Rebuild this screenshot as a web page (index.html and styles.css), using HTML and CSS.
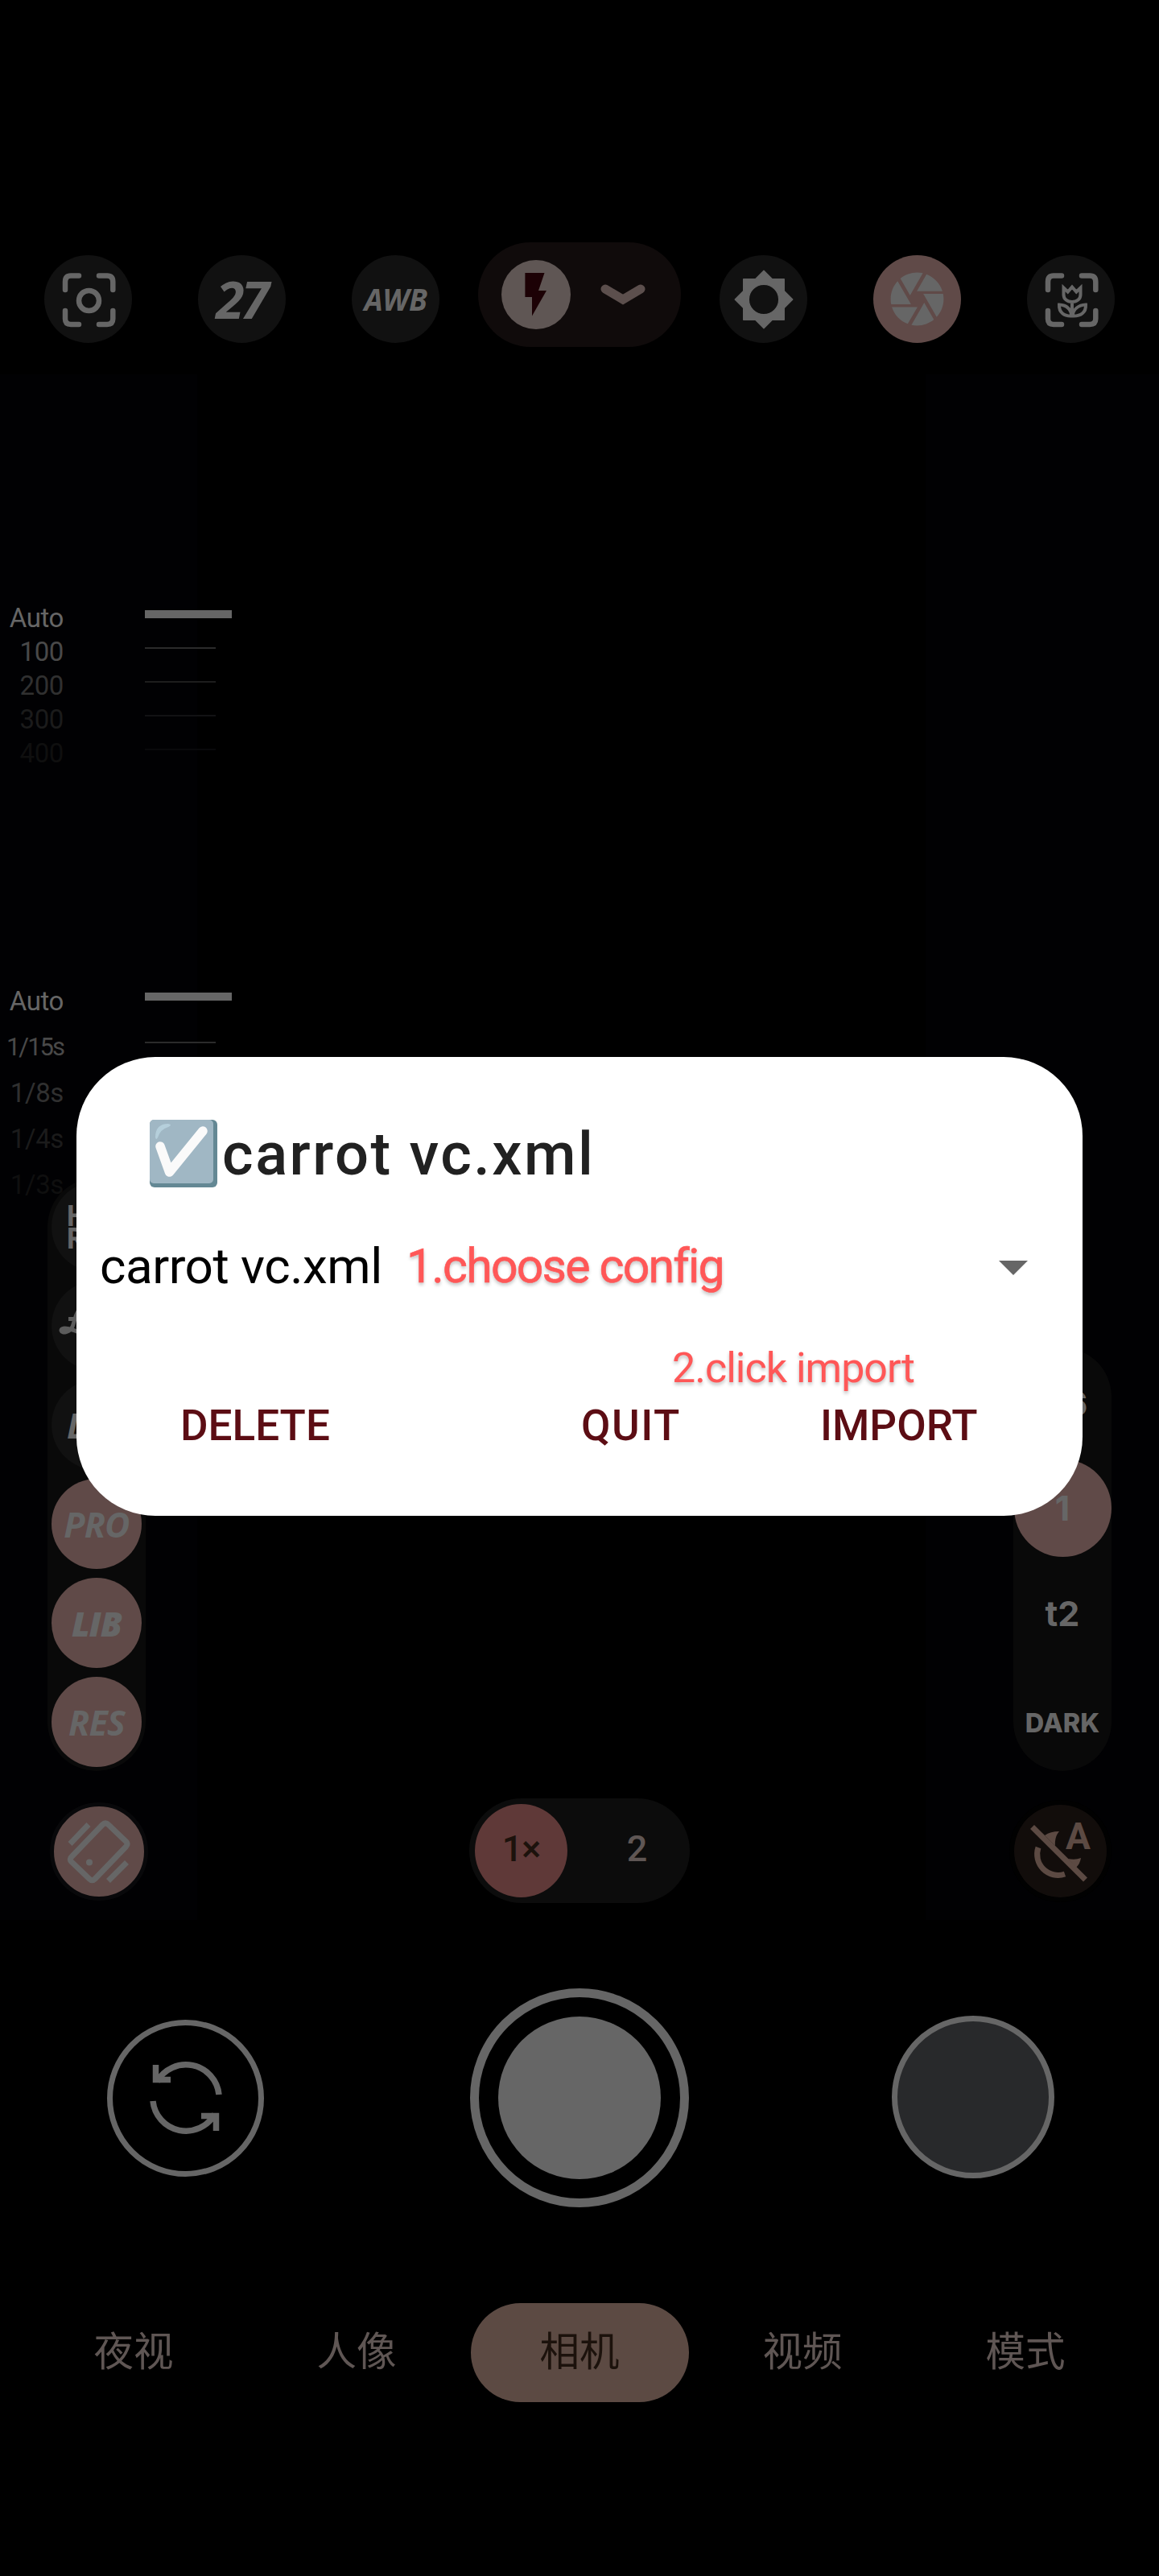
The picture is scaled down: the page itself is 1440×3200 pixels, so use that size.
FILE: index.html
```html
<!DOCTYPE html>
<html lang="zh-CN">
<head>
<meta charset="utf-8">
<title>Camera</title>
<link rel="stylesheet" href="styles.css">
</head>
<body>
<div class="camera">
  <header class="topbar">
    <div class="chip"><svg width="109" height="109" viewBox="0 0 109 109" class="line"><path d="M26 43V33Q26 25.5 33 25.5H43M68 25.5H78Q85.3 25.5 85.3 33V43M85.3 69V79Q85.3 86 78 86H68M43 86H33Q26 86 26 79V69"/><circle cx="55.5" cy="56.5" r="12.5"/></svg></div>
    <div class="chip"><span class="t27">27</span></div>
    <div class="chip"><span class="awb">AWB</span></div>
    <div class="flash">
      <div class="bolt"><svg width="86" height="86" viewBox="0 0 86 86"><path d="M29.4 16H53.5L46 38H56L38 69.5V46H29.4Z" fill="#1c0105"/></svg></div>
      <svg width="64" height="40" viewBox="0 0 64 40"><path d="M10 13L32 26L54 13" fill="none" stroke="#5c4f4d" stroke-width="11" stroke-linecap="round"/></svg>
    </div>
    <div class="chip"><svg width="76" height="76" viewBox="0 0 24 24"><path fill="#666" stroke="#666" stroke-width=".4" stroke-linejoin="round" fill-rule="evenodd" d="M20 15.31L23.31 12 20 8.69V4h-4.69L12 .69 8.69 4H4v4.69L.69 12 4 15.31V20h4.69L12 23.31 15.31 20H20zM12 6.1a5.9 5.9 0 1 1 0 11.8a5.9 5.9 0 0 1 0-11.8z"/></svg></div>
    <div class="chip rose"><svg width="79" height="79" viewBox="0 0 24 24"><path fill="#666" d="M9.4 10.5l4.77-8.26C13.47 2.09 12.75 2 12 2c-2.4 0-4.6.85-6.32 2.25l3.66 6.35.06-.1zM21.54 9c-.92-2.92-3.15-5.26-6-6.34L11.88 9h9.66zm.26 1h-7.49l.29.5 4.76 8.25C21 16.97 22 14.61 22 12c0-.69-.07-1.35-.2-2zM8.54 12l-3.9-6.75C3.01 7.03 2 9.39 2 12c0 .69.07 1.35.2 2h7.49l-1.15-2zm-6.08 3c.92 2.92 3.15 5.26 6 6.34L12.12 15H2.46zm11.27 0l-3.9 6.76c.7.15 1.42.24 2.17.24 2.4 0 4.6-.85 6.32-2.25l-3.66-6.35-.93 1.6z"/></svg></div>
    <div class="chip"><svg width="109" height="109" viewBox="0 0 109 109" class="line"><path d="M26 43V33Q26 25.5 33 25.5H43M68 25.5H78Q85.3 25.5 85.3 33V43M85.3 69V79Q85.3 86 78 86H68M43 86H33Q26 86 26 79V69"/><path class="thin" d="M45.500 40.500V49C45.500 54.500 50 58 56 58S66.500 54.500 66.500 49V40.500L61.300 45.500L56 39.500L50.700 45.500ZM56 58V76M40 61.500C49 62 54.500 67 55.500 75.500C46 76 39.500 71 40 61.500ZM73 61.500C64 62 57.500 67 56.500 75.500C67 76 73.500 71 73 61.500Z"/></svg></div>
  </header>

  <main class="finder">
    <div class="left">
      <div class="dial iso">
        <div class="row a0"><span>Auto</span><i></i></div>
        <div class="row a1"><span>100</span><i></i></div>
        <div class="row a2"><span>200</span><i></i></div>
        <div class="row a3"><span>300</span><i></i></div>
        <div class="row a4"><span>400</span><i></i></div>
      </div>
      <div class="dial shutter-speed">
        <div class="row a0"><span>Auto</span><i></i></div>
        <div class="row a1 tight"><span>1/15s</span><i></i></div>
        <div class="row a2"><span>1/8s</span><i></i></div>
        <div class="row a3"><span>1/4s</span><i></i></div>
        <div class="row a4"><span>1/3s</span><i></i></div>
      </div>
      <div class="rail">
        <div class="mode hr"><span>H</span><span>R</span></div>
        <div class="mode"><svg width="112" height="112" viewBox="0 0 112 112"><path d="M21 47.500H36M40 32C30 36 29 50 26 57C23 64 13 66 12 62C12 57 22 59 34 64" fill="none" stroke="#5c5c5c" stroke-width="5"/></svg></div>
        <div class="mode lut"><span>L</span></div>
        <div class="mode on"><span>PRO</span></div>
        <div class="mode on lib"><span>LIB</span></div>
        <div class="mode on res"><span>RES</span></div>
      </div>
      <div class="gyro"><svg width="112" height="112" viewBox="0 0 112 112" fill="none" stroke="#666" stroke-width="7"><path stroke-linejoin="round" d="M60.500 22.500Q64 19 67.500 22.500L89.500 43.500Q92.500 46.500 89.500 50L51 90Q47.500 93.500 44 90L22 69Q18.500 65.500 22 62.500Z"/><path d="M20 46.500L43 22.500M67.500 92.500L90.500 69.500"/><circle cx="44" cy="69.500" r="4" fill="#666" stroke="none"/></svg></div>
    </div>

    <div class="zoom"><span class="sel">1×</span><span class="alt">2</span></div>

    <div class="right">
      <div class="slots">
        <span class="slot first">0.6</span>
        <span class="slot current">1</span>
        <span class="slot">t2</span>
        <span class="slot dark">DARK</span>
      </div>
      <div class="night"><svg width="115" height="115" viewBox="0 0 115 115"><path d="M22.500 27.500L88.500 93" stroke="#5c4a43" stroke-width="7"/><path d="M30 53A26 26 0 0 0 63 86" fill="none" stroke="#5c4a43" stroke-width="7"/><path d="M38 38Q45 33 56 33Q50 40 51 51ZM67 67Q76 69 83 66Q82 73 77 78Z" fill="#5c4a43"/><text x="64" y="55" textLength="31">A</text></svg></div>
    </div>
  </main>

  <footer class="bottom">
    <div class="controls">
      <div class="switch"><svg width="120" height="120" viewBox="-60 -60 120 120" fill="none" stroke="#666" stroke-width="7.500"><path d="M41 -4A41.200 41.200 0 0 0 -36 -20M-37.500 -41V-22.500H-19"/><path d="M-41 4A41.200 41.200 0 0 0 36 20M37.500 41V22.500H19"/></svg></div>
      <div class="shutter"><div></div></div>
      <div class="gallery"></div>
    </div>
    <nav class="tabs"><span>夜视</span><span>人像</span><span class="active">相机</span><span>视频</span><span>模式</span></nav>
  </footer>

  <section class="dialog">
    <h1><svg width="84" height="84" viewBox="0 0 84 84"><rect width="84" height="84" rx="6" fill="#648894"/><rect width="79" height="79" rx="5" fill="#a0b7c4"/><path d="M7 22Q7 5 23 5Q29 6 23 9Q13 12 10 22Q8 26 7 22Z" fill="#b5cfdb"/><path d="M13 33L24.500 65L66 14" fill="none" stroke="#fafafa" stroke-width="11.500" stroke-linecap="round" stroke-linejoin="round"/></svg><span>carrot vc.xml</span></h1>
    <div class="picker"><span class="file">carrot vc.xml</span><span class="hint one">1.choose config</span><i></i></div>
    <div class="hint two">2.click import</div>
    <div class="actions"><span class="delete">DELETE</span><span class="quit">QUIT</span><span class="import">IMPORT</span></div>
  </section>
</div>
</body>
</html>
```
FILE: styles.css
```css
* { box-sizing: border-box; }
body { margin: 0; background: #000; font-family: Roboto, "Noto Sans CJK SC", sans-serif; color: #666; }
svg { display: block; flex: none; }
.camera { position: relative; width: 1440px; height: 3200px; overflow: hidden; background: #000; }

.topbar { display: flex; gap: 82px; height: 465px; padding: 301px 55px 0; align-items: flex-start; }
.chip { width: 109px; height: 109px; margin-top: 16px; border-radius: 50%; background: #111; display: flex; align-items: center; justify-content: center; flex: none; }
.chip.rose { background: #604a48; }
.line { fill: none; stroke: #666; stroke-width: 6.5; stroke-linecap: round; }
.line .thin { stroke-width: 4; stroke-linejoin: miter; stroke-linecap: butt; }
.t27, .awb { font-family: "Open Sans", sans-serif; font-style: italic; font-weight: 800; line-height: 1; }
.t27 { font-size: 64px; font-weight: 700; letter-spacing: -4px; margin-left: -2px; }
.awb { font-size: 37px; font-weight: 700; letter-spacing: -.5px; }
.flash { width: 252px; height: 130px; margin: 0 -34px; padding-left: 29px; border-radius: 65px; background: #100b0b; display: flex; align-items: center; gap: 33px; flex: none; }
.bolt { width: 86px; height: 86px; border-radius: 50%; background: #5f5654; }

.finder { height: 1920px; display: flex; justify-content: space-between; background: linear-gradient(90deg, #010103 0 245px, #000 245px 1150px, #010103 1150px); }
.left { width: 288px; padding-top: 282px; }
.dial { font-size: 33px; }
.row { display: flex; align-items: flex-start; height: 42px; line-height: 42px; }
.row span { width: 79px; text-align: right; white-space: nowrap; letter-spacing: -.4px; }
.row i { width: 88px; height: 2px; margin: 15px 0 0 101px; background: currentColor; }
.row.a0 i { width: 108px; height: 10px; margin-top: 11px; }
.a1 { color: #494949; }
.a2 { color: #303030; }
.a3 { color: #1b1b1b; }
.a4 { color: #0f0f0f; }
.a1 i { background: #2b2b2b; }
.a2 i { background: #1d1d1d; }
.a3 i { background: #121214; }
.a4 i { background: #09090b; }
.shutter-speed { margin-top: 258px; }
.shutter-speed .row { height: 57px; line-height: 57px; }
.shutter-speed .tight span { font-size: 31px; letter-spacing: -2px; }
.shutter-speed .row i { margin-top: 22px; }
.shutter-speed .row.a0 i { margin-top: 18px; }
.rail { width: 122px; margin: -37px 0 0 59px; padding: 5px; border-radius: 61px; background: #090909; display: flex; flex-direction: column; gap: 11px; }
.mode { height: 112px; border-radius: 50%; background: #111; display: flex; align-items: center; justify-content: center; font: italic 700 43px/1 "Open Sans", sans-serif; letter-spacing: -.8px; }
.mode.on { background: #604a48; }
.mode.on.lib { font-weight: 800; letter-spacing: -1px; }
.mode.hr { font: 700 35px/28px "Open Sans", sans-serif; flex-direction: column; align-items: flex-start; padding-left: 18px; }
.mode.lut { justify-content: flex-start; padding-left: 19px; }
.gyro { width: 122px; height: 122px; margin: 39px 0 0 62px; border: 5px solid #08080a; border-radius: 50%; background: #604a48; }

.zoom { align-self: flex-end; width: 274px; height: 130px; margin: 0 0 21px 0; padding: 7px; border-radius: 65px; background: #0c0c0c; display: flex; font-size: 45px; font-weight: 500; line-height: 112px; text-align: center; }
.sel { width: 115px; border-radius: 50%; background: #5f3938; color: #1c120c; letter-spacing: -1px; }
.alt { width: 115px; margin-left: 29px; color: #5f5654; }

.right { width: 288px; padding: 1209px 0 0 107px; }
.slots { width: 122px; height: 526px; border-radius: 61px; background: #090909; display: flex; flex-direction: column; align-items: center; font: 700 43px/1 Inter, sans-serif; }
.slot { height: 126px; flex: none; display: flex; align-items: center; }
.slot.current { width: 121px; height: 121px; margin-bottom: 7px; border-radius: 50%; background: #604a48; justify-content: center; }
.slot.first { height: 139px; margin-left: -6px; }
.slot.dark { height: 133px; padding-top: 16px; font-size: 32.5px; font-weight: 800; }
.night { width: 115px; height: 115px; margin: 42px 0 0 1px; border-radius: 50%; background: #120d0b; box-shadow: 0 0 0 6px #010101; }
.night text { font: 700 46px Roboto, sans-serif; fill: #5c4a43; }

.bottom { height: 815px; padding-top: 85px; }
.controls { display: flex; align-items: center; justify-content: space-between; padding: 0 130px 0 133px; height: 272px; }
.switch { width: 195px; height: 195px; border: 7.5px solid #666; border-radius: 50%; display: flex; align-items: center; justify-content: center; }
.shutter { width: 272px; height: 272px; margin-left: 3px; border: 11px solid #666; border-radius: 50%; padding: 24px; }
.shutter div { width: 202px; height: 202px; border-radius: 50%; background: #666; }
.gallery { width: 202px; height: 202px; margin-top: -2px; border: 7px solid #666; border-radius: 50%; background: #28292b; }
.tabs { display: grid; grid-template-columns: repeat(5, 277px); justify-content: center; justify-items: center; margin-top: 119px; font: 400 49.5px/113px "Noto Sans CJK SC", sans-serif; color: #5f5654; }
.tabs span { height: 123px; }
.tabs .active { width: 271px; border-radius: 62px; background: #5c4a43; color: #1c120c; text-align: center; }

.dialog { position: absolute; left: 95px; top: 1313px; width: 1250px; height: 570px; border-radius: 98px; background: #fff; padding-top: 78px; }
.dialog h1 { margin: 0 0 0 91px; display: flex; height: 84px; gap: 6px; font-size: 74px; font-weight: 500; line-height: 85px; letter-spacing: 2.5px; color: #212121; }
.picker { display: flex; align-items: center; height: 80px; margin-top: 57px; padding: 0 68px 0 29px; }
.file { font-size: 62px; letter-spacing: -.5px; color: #000; width: 381px; white-space: nowrap; }
.hint { color: #ff5757; text-shadow: 0 3px 4px rgba(0,0,0,.25); white-space: nowrap; }
.one { font-size: 59px; letter-spacing: -1.8px; -webkit-text-stroke: .6px #ff5757; }
.picker i { margin: 6px 0 0 auto; border: 18px solid transparent; border-top-color: #666; border-bottom: 0; }
.two { margin: 58px 0 0 740px; font-size: 52px; line-height: 60px; letter-spacing: -1px; }
.actions { display: flex; margin: 11px 0 0 129px; font-size: 53px; font-weight: 500; line-height: 60px; color: #5c0d14; }
.delete { width: 498px; }
.quit { width: 297px; letter-spacing: 1.5px; }
```
